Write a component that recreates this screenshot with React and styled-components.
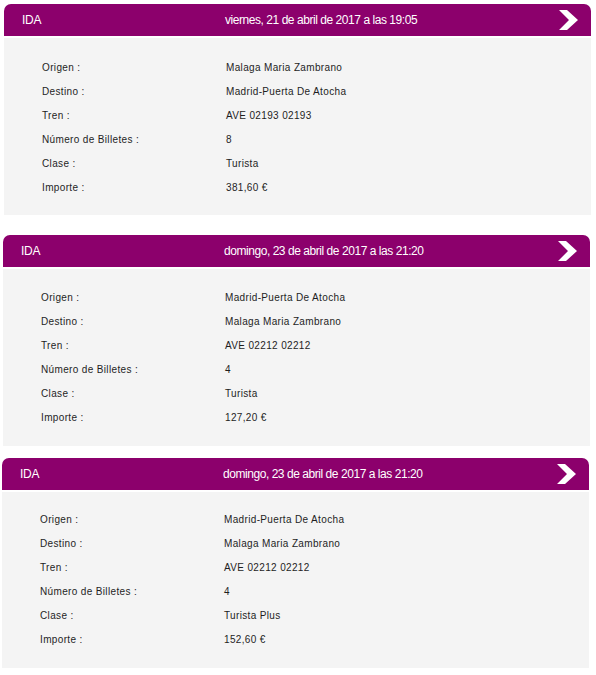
import React from "react";
import styled, { createGlobalStyle } from "styled-components";

const GlobalStyle = createGlobalStyle`
    body {
        margin: 0;
        background: #fff;
        font-family: "Liberation Sans", Arial, sans-serif;
    }
`;

const Page = styled.div`
    width: 596px;
    padding-top: 4px;
`;

const Card = styled.section`
    width: 587px;
    margin: ${(p) => p.top}px 0 0 ${(p) => p.left}px;
`;

const Header = styled.div`
    display: grid;
    grid-template-columns: 203px 1fr 32px;
    align-items: center;
    height: 32px;
    padding-left: 18px;
    background: #8c006c;
    border-radius: 7px 7px 0 0;
    color: #fff;
    font-size: 12px;
    letter-spacing: -0.45px;
`;

const Direction = styled.span`
    letter-spacing: -0.3px;
`;

const DateText = styled.span`
    white-space: nowrap;
`;

const Arrow = styled.svg`
    width: 19px;
    height: 20px;
    display: block;
`;

const Body = styled.div`
    margin-top: 2px;
    padding: ${(p) => p.padTop}px 0 ${(p) => p.padBottom}px 38px;
    background: #f4f4f4;
`;

const Row = styled.div`
    display: grid;
    grid-template-columns: 184px 1fr;
    height: 24px;
    align-items: center;
    font-size: 10px;
    letter-spacing: 0.35px;
    color: #1e1e1e;
`;

const trips = [
    {
        top: 0, left: 4, padTop: 17, padBottom: 16,
        date: "viernes, 21 de abril de 2017 a las 19:05",
        origen: "Malaga Maria Zambrano",
        destino: "Madrid-Puerta De Atocha",
        tren: "AVE 02193 02193",
        billetes: "8",
        clase: "Turista",
        importe: "381,60 €",
    },
    {
        top: 20, left: 3, padTop: 16, padBottom: 17,
        date: "domingo, 23 de abril de 2017 a las 21:20",
        origen: "Madrid-Puerta De Atocha",
        destino: "Malaga Maria Zambrano",
        tren: "AVE 02212 02212",
        billetes: "4",
        clase: "Turista",
        importe: "127,20 €",
    },
    {
        top: 12, left: 2, padTop: 15, padBottom: 17,
        date: "domingo, 23 de abril de 2017 a las 21:20",
        origen: "Madrid-Puerta De Atocha",
        destino: "Malaga Maria Zambrano",
        tren: "AVE 02212 02212",
        billetes: "4",
        clase: "Turista Plus",
        importe: "152,60 €",
    },
];

function TripCard({ trip }) {
    const rows = [
        ["Origen :", trip.origen],
        ["Destino :", trip.destino],
        ["Tren :", trip.tren],
        ["Número de Billetes :", trip.billetes],
        ["Clase :", trip.clase],
        ["Importe :", trip.importe],
    ];

    return (
        <Card top={trip.top} left={trip.left}>
            <Header>
                <Direction>IDA</Direction>
                <DateText>{trip.date}</DateText>
                <Arrow viewBox="0 0 19 20">
                    <polygon points="0,0 8,0 19,10 8,20 0,20 10,10" fill="#fff" />
                </Arrow>
            </Header>
            <Body padTop={trip.padTop} padBottom={trip.padBottom}>
                {rows.map(([label, value]) => (
                    <Row key={label}>
                        <span>{label}</span>
                        <span>{value}</span>
                    </Row>
                ))}
            </Body>
        </Card>
    );
}

export default function App() {
    return (
        <React.Fragment>
            <GlobalStyle />
            <Page>
                {trips.map((trip, i) => (
                    <TripCard key={i} trip={trip} />
                ))}
            </Page>
        </React.Fragment>
    );
}
